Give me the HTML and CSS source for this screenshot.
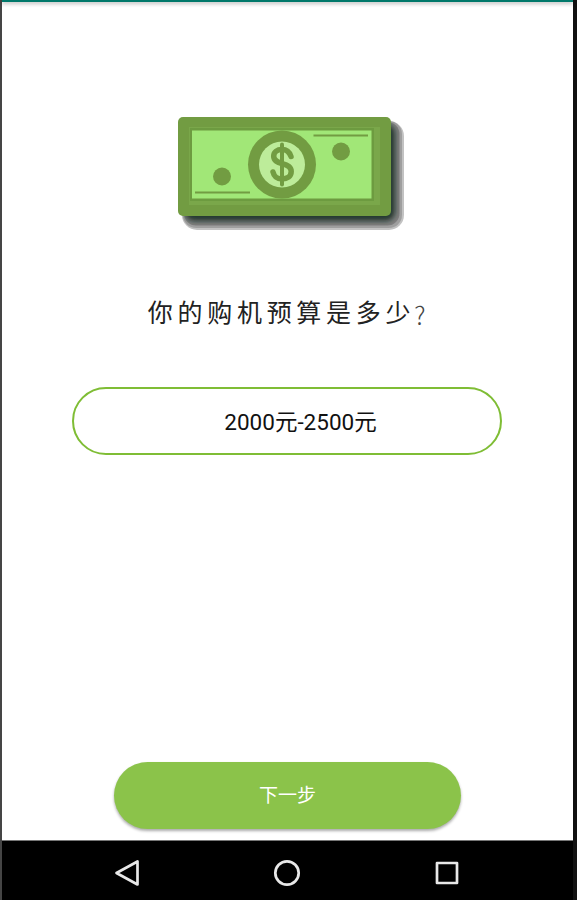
FILE: index.html
```
<!DOCTYPE html>
<html lang="zh-CN">
<head>
    <meta charset="UTF-8">
    <meta name="viewport" content="width=device-width, initial-scale=1.0">
    <title>购机预算</title>
    <link rel="stylesheet" href="styles.css">
</head>
<body>
    <div class="phone">
        <div class="status-bar"></div>
        <main class="content">
            <svg class="money" width="240" height="126" viewBox="170 110 240 126">
                <defs>
                    <filter id="soft" x="-20%" y="-20%" width="140%" height="150%">
                        <feGaussianBlur stdDeviation="2.5"/>
                    </filter>
                    <filter id="edge" x="-20%" y="-20%" width="140%" height="150%">
                        <feGaussianBlur stdDeviation=".7"/>
                    </filter>
                </defs>
                <!-- shadow -->
                <g filter="url(#edge)">
                    <rect x="182" y="121" width="222" height="109" rx="15" opacity=".24"/>
                    <rect x="183" y="121" width="219" height="107" rx="13" opacity=".18"/>
                    <rect x="184" y="122" width="215.500" height="103.500" rx="12" opacity=".2"/>
                </g>
                <rect x="185" y="124" width="210" height="97" rx="9" fill="#10281c" opacity=".8" filter="url(#soft)"/>
                <!-- note -->
                <rect x="178" y="117" width="213" height="99" rx="5" fill="#729c42"/>
                <rect x="189" y="127" width="191" height="78" fill="#7aa74a"/>
                <rect x="190" y="128" width="184" height="73" fill="#6d9b40"/>
                <rect x="192" y="130.500" width="179.500" height="68" fill="#a1e777"/>
                <circle cx="282" cy="164.500" r="34" fill="#729c42"/>
                <circle cx="282" cy="164.500" r="23" fill="#bdec9a"/>
                <circle cx="222" cy="176.500" r="9" fill="#729c42"/>
                <circle cx="341" cy="151.500" r="9" fill="#729c42"/>
                <path d="M195 192.500h55M313.500 135.500H368" stroke="#729c42" stroke-width="2.200"/>
                <!-- dollar -->
                <path d="M291 156.500C289.500 152 286.500 149.500 282 149.500c-5 0-8.300 2.700-8.300 6.800 0 4.500 4 5.900 8.600 7.400 5.500 1.600 8.900 3.200 8.900 7.900 0 4.800-4 7.400-9.200 7.400-5 0-8-2.600-9-7" fill="none" stroke="#729c42" stroke-width="5.500" stroke-linecap="round"/>
                <path d="M282 144.500v40" stroke="#729c42" stroke-width="4" stroke-linecap="round"/>
            </svg>
            <h1 class="question">你的购机预算是多少<span class="mark">?</span></h1>
            <div class="budget">2000元-2500元</div>
            <button class="next-btn">下一步</button>
        </main>
        <nav class="nav-bar">
            <svg width="28" height="28" viewBox="0 0 28 28">
                <path d="M24.500 2.500v23L3.500 14z"/>
            </svg>
            <svg width="28" height="28" viewBox="0 0 28 28">
                <circle cx="14" cy="14" r="11.700"/>
            </svg>
            <svg width="28" height="28" viewBox="0 0 28 28">
                <rect x="4" y="4" width="20" height="20"/>
            </svg>
        </nav>
    </div>
</body>
</html>
```
FILE: styles.css
```
*{
    box-sizing: border-box;
    padding: 0;
    margin: 0;
}
body{
    height: 900px;
    background-color: #fff;
    font-family: Roboto, "Noto Sans CJK SC", sans-serif;
    overflow: hidden;
}
.phone{
    width: 577px;
    height: 900px;
    display: flex;
    flex-direction: column;
    border-left: 2px solid #454545;
    border-right: 4px solid #111;
}
.status-bar{
    height: 2px;
    background-color: #00796b;
    box-shadow: 0 1px 4px #0007;
}
.content{
    flex-grow: 1;
    display: flex;
    flex-direction: column;
    align-items: center;
    padding-top: 108px;
    border-bottom: 1px solid #777;
}
.money{
    margin-left: 5px;
}
.question{
    height: 36px;
    margin-top: 57px;
    margin-left: 4px;
    font-family: "Noto Sans CJK SC", sans-serif;
    font-size: 25px;
    font-weight: 400;
    line-height: 36px;
    letter-spacing: 4.700px;
    color: #222;
}
.mark{
    position: relative;
    top: 3px;
    left: -1px;
    font-weight: 300;
    color: #444;
}
.budget{
    width: 430px;
    height: 68px;
    margin-top: 58px;
    margin-right: 2px;
    padding-left: 28px;
    border: 2px solid #7fbd35;
    border-radius: 34px;
    font-size: 22.500px;
    line-height: 66px;
    text-align: center;
    color: #111;
}
.next-btn{
    width: 347px;
    height: 67px;
    margin-top: auto;
    margin-bottom: 11px;
    border: none;
    border-radius: 34px;
    background-color: #8bc34a;
    box-shadow: 0 2px 3px #0005;
    font-family: inherit;
    font-size: 19px;
    line-height: 64px;
    color: #fff;
}
.nav-bar{
    height: 59px;
    display: flex;
    justify-content: center;
    gap: 132px;
    padding-top: 18px;
    padding-right: 1px;
    background-color: #000;
}
.nav-bar svg{
    fill: none;
    stroke: #e8e8e8;
    stroke-width: 2.700;
    stroke-linejoin: round;
}
```
